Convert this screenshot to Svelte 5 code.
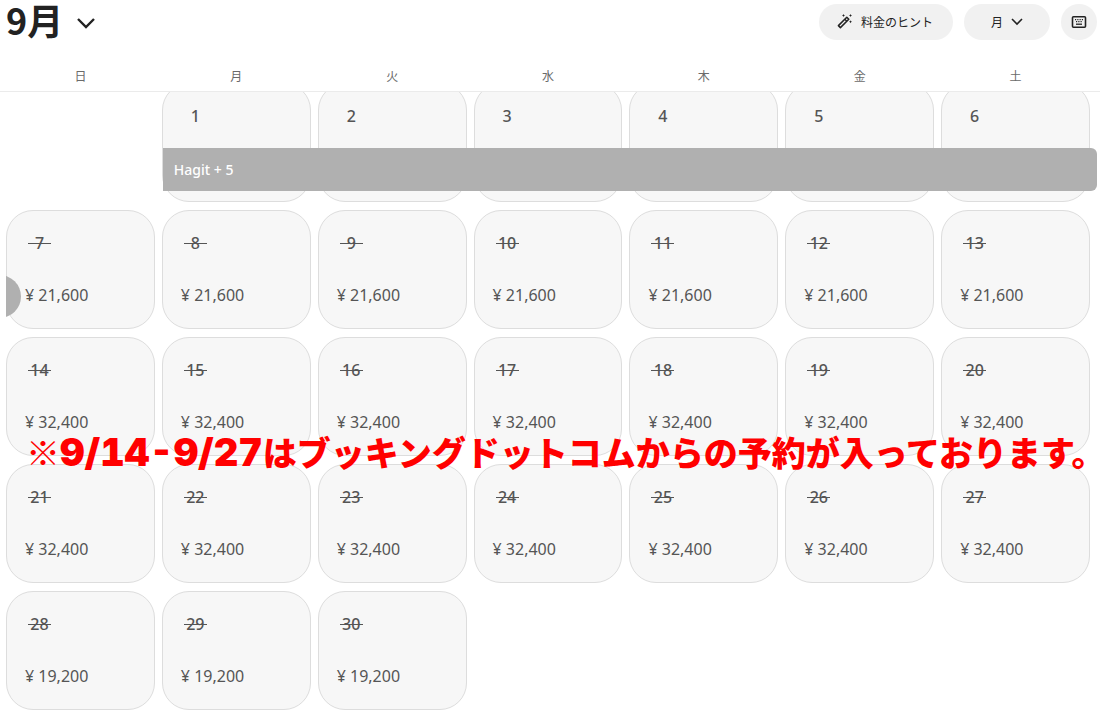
<script lang="ts">
  interface Day {
    date: number;
    price?: string;
    blocked: boolean;
  }

  const weekdays = ['日', '月', '火', '水', '木', '金', '土'];

  // The month starts on a Monday
  const leadingBlanks = 1;

  function priceFor(date: number) {
    if (date < 7) return undefined;
    if (date < 14) return '¥ 21,600';
    if (date < 28) return '¥ 32,400';
    return '¥ 19,200';
  }

  const days: Day[] = Array.from({ length: 30 }, (_, i) => ({
    date: i + 1,
    price: priceFor(i + 1),
    blocked: i + 1 >= 7,
  }));

  let selected = $state<number | null>(null);
</script>

<div class="calendar">
  <header class="toolbar">
    <h1>
      <button class="month" type="button">
        <span>9月</span>
        <svg width="20" height="28" viewBox="0 0 20 28" aria-hidden="true">
          <path d="M2 9l8 8 8-8" fill="none" stroke="currentColor" stroke-width="2.4" />
        </svg>
      </button>
    </h1>
    <div class="actions">
      <button class="pill tips" type="button">
        <svg width="16" height="16" viewBox="0 0 16 16" aria-hidden="true">
          <path
            d="M1.4 12.6L9.8 4.200l2 2-8.400 8.400z"
            fill="none"
            stroke="currentColor"
            stroke-width="1.500"
            stroke-linejoin="round"
          />
          <path d="M7.800 6.200l2 2" stroke="currentColor" stroke-width="1.300" />
          <path
            d="M6.500 1l.5 1 1 .5-1 .5-.5 1-.5-1-1-.5 1-.5zM13.500 1l.5 1 1 .5-1 .5-.5 1-.5-1-1-.5 1-.5zM13.500 7.200l.5 1 1 .5-1 .5-.5 1-.5-1-1-.5 1-.5z"
            fill="currentColor"
          />
        </svg>
        料金のヒント
      </button>
      <button class="pill view" type="button">
        月
        <svg width="12" height="12" viewBox="0 0 12 12" aria-hidden="true">
          <path d="M1 4l5 5 5-5" fill="none" stroke="currentColor" stroke-width="1.600" />
        </svg>
      </button>
      <button class="pill round" type="button" aria-label="キーボードショートカット">
        <svg width="16" height="14" viewBox="0 0 16 14" aria-hidden="true">
          <rect x="1.500" y="1.800" width="13" height="10.400" rx="1" fill="none" stroke="currentColor" stroke-width="1.600" />
          <path
            d="M4 4.600h8M5 6.600h6"
            stroke="currentColor"
            stroke-width="1.100"
            stroke-dasharray="1.200 1.067"
          />
          <path d="M5 9.200h6" stroke="currentColor" stroke-width="1.300" />
        </svg>
      </button>
    </div>
  </header>

  <div class="weekdays">
    {#each weekdays as name}
      <span>{name}</span>
    {/each}
  </div>

  <main class="scroller">
    <div class="days">
      {#each Array(leadingBlanks) as _}
        <span></span>
      {/each}
      {#each days as day (day.date)}
        <button
          class="day"
          type="button"
          aria-pressed={selected === day.date}
          onclick={() => (selected = day.date)}
        >
          <span class="date" class:blocked={day.blocked}>{day.date}</span>
          {#if day.price}
            <span class="price">{day.price}</span>
          {/if}
        </button>
      {/each}
    </div>

    <button class="booking" type="button">Hagit + 5</button>
    <!-- Tail of the booking, carried over to the next week -->
    <div class="booking-end"></div>

    <p class="notice">
      <span class="mark">※</span><span class="range">9/14-9/27</span>はブッキングドットコムからの予約が入っております。
    </p>
  </main>
</div>

<style>
  :global(body) {
    margin: 0;
    background: #fff;
  }

  .calendar {
    font-family: 'Noto Sans', 'Noto Sans CJK JP', sans-serif;
    color: #222;
  }

  button {
    font: inherit;
    color: inherit;
    border: 0;
    padding: 0;
    cursor: pointer;
  }

  .toolbar {
    display: flex;
    justify-content: space-between;
    align-items: flex-start;
    height: 44px;
    padding: 0 3px 0 6px;
  }

  h1 {
    margin: 0;
    font-family: 'Noto Sans CJK JP', sans-serif;
    font-size: 36px;
    line-height: 38px;
    font-weight: 700;
  }

  .month {
    display: flex;
    align-items: flex-end;
    gap: 13px;
    background: none;
  }

  .actions {
    display: flex;
    gap: 11px;
    padding-top: 4px;
  }

  .pill {
    display: flex;
    align-items: center;
    justify-content: center;
    height: 36px;
    border-radius: 18px;
    background: #f1f1f1;
    font-family: 'Noto Sans CJK JP', sans-serif;
    font-size: 12px;
  }

  .tips {
    gap: 8px;
    padding: 0 20px 2px 18px;
  }

  .view {
    gap: 8px;
    padding: 0 27px 2px;
  }

  .round {
    width: 36px;
  }

  .weekdays,
  .days {
    display: grid;
    grid-template-columns: repeat(7, 1fr);
    column-gap: 7px;
    padding: 0 10px 0 6px;
  }

  .weekdays {
    height: 47px;
    border-bottom: 1px solid #ebebeb;
    font-family: 'Noto Sans CJK JP', sans-serif;
    font-size: 12px;
    line-height: 64px;
    text-align: center;
    color: #6a6a6a;
  }

  .scroller {
    position: relative;
    overflow: hidden;
    padding-bottom: 8px;
  }

  /* The first week is partly scrolled under the weekday row */
  .days {
    row-gap: 8px;
    margin-top: -9px;
  }

  .day {
    display: flex;
    flex-direction: column;
    align-items: flex-start;
    box-sizing: border-box;
    height: 119px;
    padding: 21px 18px;
    border: 1px solid #ddd;
    border-radius: 27px;
    background: #f7f7f7;
    color: #555;
    text-align: left;
  }

  .date {
    position: relative;
    width: 23px;
    margin-left: 3px;
    font-size: 16px;
    line-height: 22px;
    font-weight: 500;
    text-align: center;
  }

  .blocked::after {
    content: '';
    position: absolute;
    top: 11px;
    left: 0;
    width: 100%;
    height: 1px;
    background: #555;
  }

  .price {
    margin-top: 30px;
    font-size: 16px;
    line-height: 22px;
  }

  .booking {
    position: absolute;
    top: 56px;
    left: calc((100% - 16px) / 7 + 8px);
    right: 3px;
    height: 43px;
    padding: 0 11px;
    border-radius: 0 6px 6px 0;
    background: #b0b0b0;
    color: #fff;
    font-size: 14px;
    font-weight: 500;
    text-align: left;
  }

  .booking-end {
    position: absolute;
    top: 184px;
    left: 6px;
    width: 15px;
    height: 41px;
    overflow: hidden;
  }

  .booking-end::after {
    content: '';
    position: absolute;
    top: -1px;
    right: 0;
    width: 43px;
    height: 43px;
    border-radius: 50%;
    background: #b0b0b0;
  }

  .notice {
    position: absolute;
    top: 336px;
    left: 26px;
    margin: 0;
    font-family: 'Noto Sans CJK JP', sans-serif;
    font-size: 34px;
    line-height: 48px;
    font-weight: 900;
    color: #f00;
    white-space: nowrap;
  }

  .mark {
    font-weight: 400;
  }

  .range {
    font-family: Inter, sans-serif;
    font-size: 38px;
    font-variant-numeric: tabular-nums;
  }
</style>
